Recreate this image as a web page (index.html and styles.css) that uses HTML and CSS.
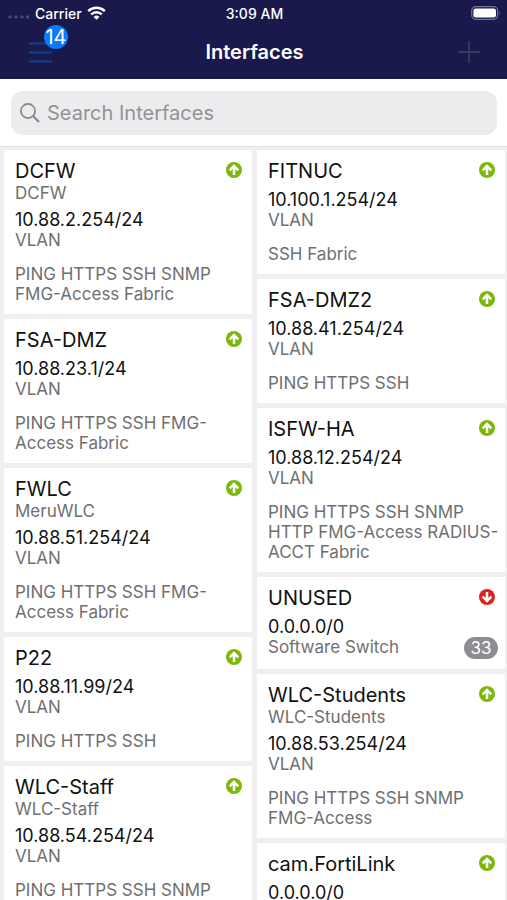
FILE: index.html
```html
<!DOCTYPE html>
<html lang="en">
<head>
<meta charset="utf-8">
<meta name="viewport" content="width=device-width, initial-scale=1">
<title>Interfaces</title>
<link rel="stylesheet" href="styles.css">
</head>
<body>
<svg class="defs" aria-hidden="true">
  <symbol id="arrow" viewBox="0 0 16 16">
    <circle cx="8" cy="8" r="8" fill="currentColor"/>
    <path d="M8 13V5M3.700 8.300 8 4l4.300 4.300" fill="none" stroke="#fff" stroke-width="2.500"/>
  </symbol>
</svg>
<div class="app">
  <header class="top">
    <div class="status">
      <div class="carrier">
        <svg width="22" height="6" viewBox="0 0 22 6" fill="#4d4d78" aria-hidden="true"><circle cx="2" cy="3" r="1.700"/><circle cx="8" cy="3" r="1.700"/><circle cx="14" cy="3" r="1.700"/><circle cx="19.500" cy="3" r="1.700"/></svg>
        <span>Carrier</span>
        <svg width="19" height="14" viewBox="0 0 19 14" fill="none" stroke="#fff" stroke-width="2.4" aria-hidden="true"><path d="M1.200 5.200a11.800 11.800 0 0 1 16.600 0M4.200 8.400a7.500 7.500 0 0 1 10.600 0"/><path d="M9.500 13.800 6.600 10.900a4.200 4.200 0 0 1 5.800 0z" fill="#fff" stroke="none"/></svg>
      </div>
      <time>3:09 AM</time>
      <div class="battery">
        <svg width="30" height="14" viewBox="0 0 30 14" aria-hidden="true"><rect x=".7" y=".7" width="26" height="12.600" rx="4" fill="none" stroke="#74749a" stroke-width="1.200"/><rect x="2.400" y="2.400" width="22.600" height="9.200" rx="2.300" fill="#fff"/><path d="M28.300 4.800q1.500 2.200 0 4.400z" fill="#74749a"/></svg>
      </div>
    </div>
    <nav class="bar">
      <button class="menu" aria-label="Menu">
        <svg width="23" height="21" viewBox="0 0 23 21" stroke="#0f4094" stroke-width="1.800"><path d="M0 1.500h23M0 10.500h23M0 19.500h23"/></svg>
        <span class="count">14</span>
      </button>
      <h1>Interfaces</h1>
      <button class="add" aria-label="Add">
        <svg width="22" height="22" viewBox="0 0 22 22" stroke="#3b3a5c" stroke-width="1.800"><path d="M11 0v22M0 11h22"/></svg>
      </button>
    </nav>
  </header>
  <form class="search">
    <label class="field">
      <svg width="20" height="20" viewBox="0 0 20 20" fill="none" stroke="#85858a" stroke-width="1.700" aria-hidden="true"><circle cx="8" cy="8" r="7.100"/><path d="M13 13l6 6" stroke-width="2.100"/></svg>
      <input type="search" placeholder="Search Interfaces" aria-label="Search Interfaces">
    </label>
  </form>
  <main class="list">
    <div class="column">
      <article class="card">
        <div class="head"><h2>DCFW</h2><svg class="state up" role="img" aria-label="Up"><use href="#arrow"/></svg></div>
        <p class="alias">DCFW</p>
        <p class="ip">10.88.2.254/24</p>
        <div class="type"><span>VLAN</span></div>
        <p class="services">PING HTTPS SSH SNMP FMG-Access Fabric</p>
      </article>
      <article class="card">
        <div class="head"><h2>FSA-DMZ</h2><svg class="state up" role="img" aria-label="Up"><use href="#arrow"/></svg></div>
        <p class="ip">10.88.23.1/24</p>
        <div class="type"><span>VLAN</span></div>
        <p class="services">PING HTTPS SSH FMG-Access Fabric</p>
      </article>
      <article class="card">
        <div class="head"><h2>FWLC</h2><svg class="state up" role="img" aria-label="Up"><use href="#arrow"/></svg></div>
        <p class="alias">MeruWLC</p>
        <p class="ip">10.88.51.254/24</p>
        <div class="type"><span>VLAN</span></div>
        <p class="services">PING HTTPS SSH FMG-Access Fabric</p>
      </article>
      <article class="card">
        <div class="head"><h2>P22</h2><svg class="state up" role="img" aria-label="Up"><use href="#arrow"/></svg></div>
        <p class="ip">10.88.11.99/24</p>
        <div class="type"><span>VLAN</span></div>
        <p class="services">PING HTTPS SSH</p>
      </article>
      <article class="card">
        <div class="head"><h2>WLC-Staff</h2><svg class="state up" role="img" aria-label="Up"><use href="#arrow"/></svg></div>
        <p class="alias">WLC-Staff</p>
        <p class="ip">10.88.54.254/24</p>
        <div class="type"><span>VLAN</span></div>
        <p class="services">PING HTTPS SSH SNMP</p>
      </article>
    </div>
    <div class="column">
      <article class="card">
        <div class="head"><h2>FITNUC</h2><svg class="state up" role="img" aria-label="Up"><use href="#arrow"/></svg></div>
        <p class="ip">10.100.1.254/24</p>
        <div class="type"><span>VLAN</span></div>
        <p class="services">SSH Fabric</p>
      </article>
      <article class="card">
        <div class="head"><h2>FSA-DMZ2</h2><svg class="state up" role="img" aria-label="Up"><use href="#arrow"/></svg></div>
        <p class="ip">10.88.41.254/24</p>
        <div class="type"><span>VLAN</span></div>
        <p class="services">PING HTTPS SSH</p>
      </article>
      <article class="card">
        <div class="head"><h2>ISFW-HA</h2><svg class="state up" role="img" aria-label="Up"><use href="#arrow"/></svg></div>
        <p class="ip">10.88.12.254/24</p>
        <div class="type"><span>VLAN</span></div>
        <p class="services">PING HTTPS SSH SNMP HTTP FMG-Access RADIUS-ACCT Fabric</p>
      </article>
      <article class="card">
        <div class="head"><h2>UNUSED</h2><svg class="state down" role="img" aria-label="Down"><use href="#arrow"/></svg></div>
        <p class="ip">0.0.0.0/0</p>
        <div class="type"><span>Software Switch</span><span class="members">33</span></div>
      </article>
      <article class="card">
        <div class="head"><h2>WLC-Students</h2><svg class="state up" role="img" aria-label="Up"><use href="#arrow"/></svg></div>
        <p class="alias">WLC-Students</p>
        <p class="ip">10.88.53.254/24</p>
        <div class="type"><span>VLAN</span></div>
        <p class="services">PING HTTPS SSH SNMP FMG-Access</p>
      </article>
      <article class="card">
        <div class="head"><h2>cam.FortiLink</h2><svg class="state up" role="img" aria-label="Up"><use href="#arrow"/></svg></div>
        <p class="ip">0.0.0.0/0</p>
      </article>
    </div>
  </main>
</div>
</body>
</html>
```

FILE: styles.css
```css
* {
  box-sizing: border-box;
}

body,
h1,
h2,
p {
  margin: 0;
}

body {
  font-family: Inter, "Liberation Sans", sans-serif;
  background: #efeff2;
}

.defs {
  position: absolute;
  width: 0;
  height: 0;
}

.app {
  display: flex;
  flex-direction: column;
  height: 100vh;
  overflow: hidden;
}

.top {
  background: #19194b;
  color: #fff;
  padding-bottom: 5px;
}

.status {
  display: grid;
  grid-template-columns: 1fr auto 1fr;
  align-items: center;
  height: 26px;
  padding: 0 6px 0 8px;
  font-size: 14px;
  font-weight: 500;
}

.carrier {
  display: flex;
  align-items: center;
  gap: 5px;
}

.carrier svg:first-child {
  margin-top: 8px;
}

.battery {
  display: flex;
  justify-content: flex-end;
}

.bar {
  display: grid;
  grid-template-columns: 1fr auto 1fr;
  align-items: center;
  height: 48px;
  padding: 4px 27px 0 29px;
}

.bar button {
  display: flex;
  padding: 0;
  border: 0;
  background: none;
}

.menu {
  position: relative;
  justify-self: start;
}

.count {
  position: absolute;
  left: 15px;
  top: -17px;
  width: 24px;
  height: 24px;
  border-radius: 50%;
  background: #0a7bff;
  color: #fff;
  font: 20px/25px Inter, "Liberation Sans", sans-serif;
  text-align: center;
}

.add {
  justify-self: end;
}

h1 {
  font-size: 20px;
  line-height: 24px;
  font-weight: 600;
}

.search {
  padding: 12px 10px 11px 11px;
  background: #fff;
  border-bottom: 1px solid #e2e2e5;
}

.field {
  display: flex;
  align-items: center;
  gap: 7px;
  height: 44px;
  padding: 0 9px;
  border-radius: 12px;
  background: #ececee;
}

.field input {
  flex: 1;
  min-width: 0;
  padding: 0;
  border: 0;
  outline: 0;
  background: none;
  font: 20px/24px Inter, "Liberation Sans", sans-serif;
}

.field input::placeholder {
  color: #929297;
}

.list {
  flex: 1;
  min-height: 0;
  overflow: hidden;
  display: grid;
  grid-template-columns: 1fr 1fr;
  align-items: start;
  gap: 5px;
  padding: 3px 2px 0 4px;
}

.column {
  display: grid;
  gap: 5px;
}

.card {
  padding: 10px 3px 10px 11px;
  background: #fff;
  color: #6f6f71;
  font-size: 17px;
  line-height: 20px;
}

.head {
  display: flex;
  justify-content: space-between;
  padding-right: 7px;
}

h2 {
  color: #111;
  font-size: 20px;
  line-height: 23px;
  font-weight: 400;
}

.state {
  width: 16px;
  height: 16px;
  margin-top: 2px;
}

.up {
  color: #7cb70b;
}

.down {
  color: #d9251f;
  transform: rotate(180deg);
}

.ip {
  margin-top: 7px;
  color: #111;
  font-size: 18px;
}

.type {
  display: flex;
  justify-content: space-between;
}

.members {
  min-width: 34px;
  margin-right: 4px;
  border-radius: 11px;
  background: #8e8e90;
  color: #fff;
  line-height: 22px;
  text-align: center;
}

.services {
  margin-top: 14px;
}
```
